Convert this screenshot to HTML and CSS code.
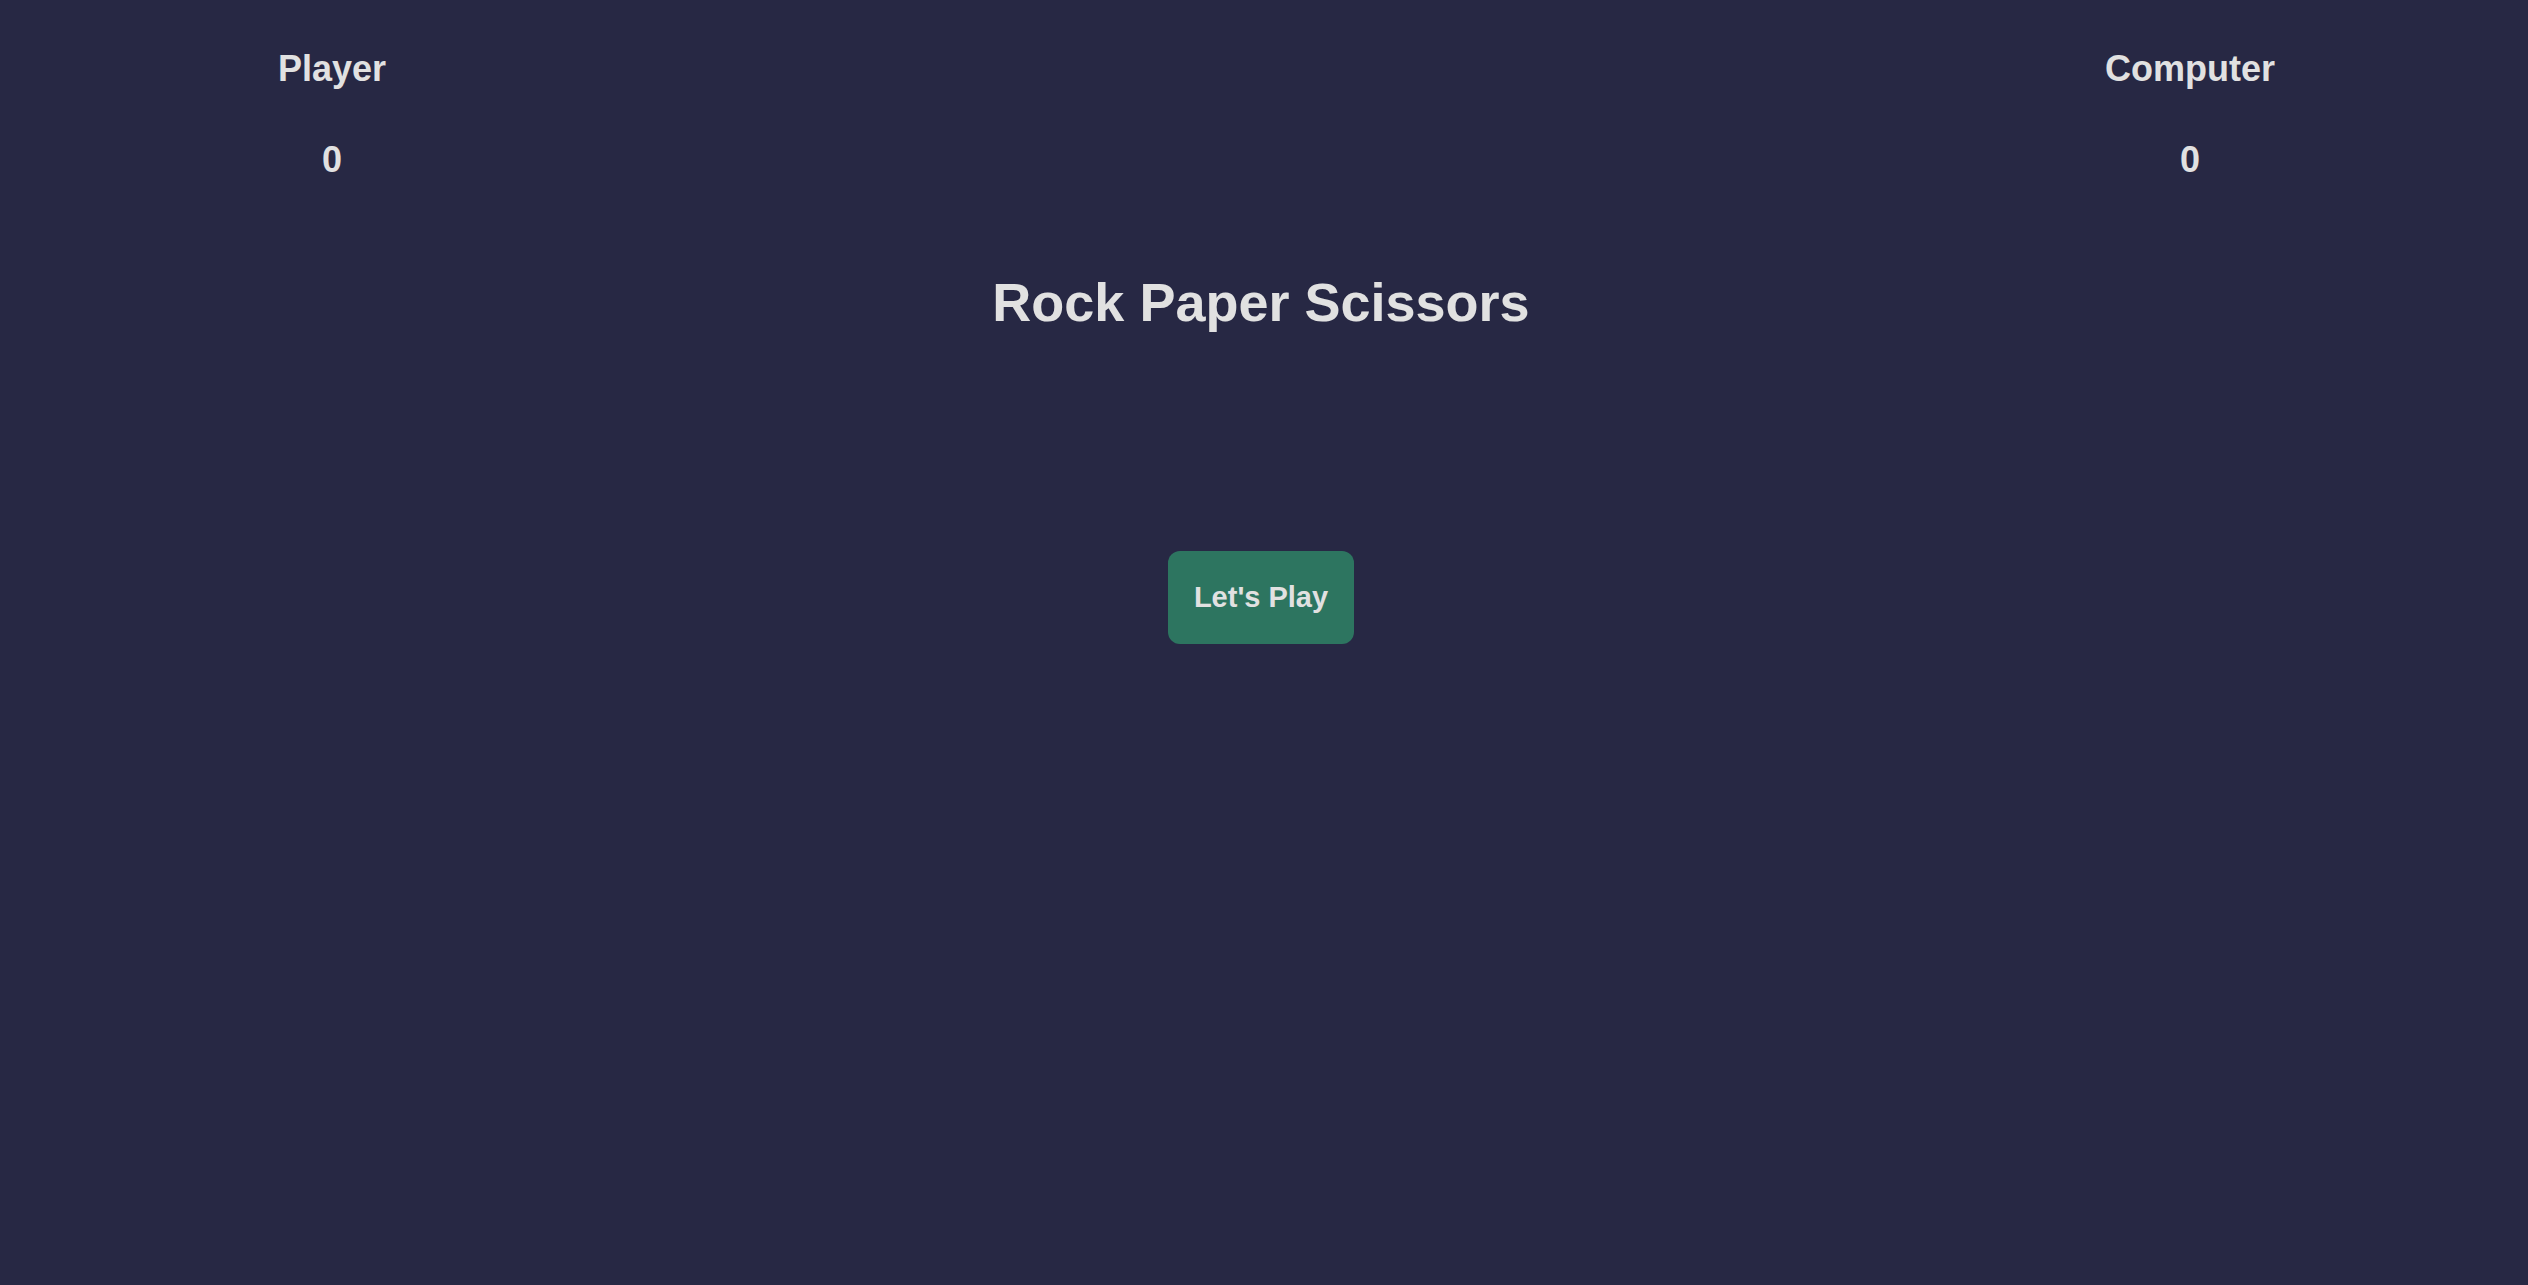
FILE: index.html
```html
<!DOCTYPE html>
<html lang="en">
<head>
<meta charset="utf-8">
<title>Rock Paper Scissors</title>
<link rel="stylesheet" href="styles.css">
</head>
<body>
<main class="game">
  <section class="scores">
    <div class="score">
      <h2 class="score-label">Player</h2>
      <p class="score-value">0</p>
    </div>
    <div class="score">
      <h2 class="score-label">Computer</h2>
      <p class="score-value">0</p>
    </div>
  </section>
  <h1 class="title">Rock Paper Scissors</h1>
  <div class="actions">
    <button class="play-btn" type="button">Let's Play</button>
  </div>
</main>
</body>
</html>
```
FILE: styles.css
```css
html, body {
  margin: 0;
  padding: 0;
}
body {
  background: #272844;
  color: #e1e1e1;
  font-family: "Liberation Sans", Arial, sans-serif;
  min-height: 100vh;
}
.game {
  display: flex;
  flex-direction: column;
  align-items: stretch;
  padding-right: 6px;
}
.scores {
  display: flex;
  justify-content: space-between;
  padding: 48px 232px 0 232px;
}
.score {
  width: 200px;
  display: flex;
  flex-direction: column;
  align-items: center;
  gap: 49px;
}
.score-label,
.score-value {
  margin: 0;
  font-size: 36px;
  font-weight: bold;
  line-height: normal;
}
.title {
  margin: 90px 0 0;
  text-align: center;
  font-size: 54px;
  font-weight: bold;
  line-height: normal;
}
.actions {
  display: flex;
  justify-content: center;
  margin-top: 218px;
}
.play-btn {
  background: #2d7560;
  color: #e1e1e1;
  border: none;
  border-radius: 12px;
  font-family: "Liberation Sans", Arial, sans-serif;
  font-size: 29px;
  font-weight: bold;
  line-height: 33px;
  padding: 30px 26px;
  cursor: pointer;
}
```
